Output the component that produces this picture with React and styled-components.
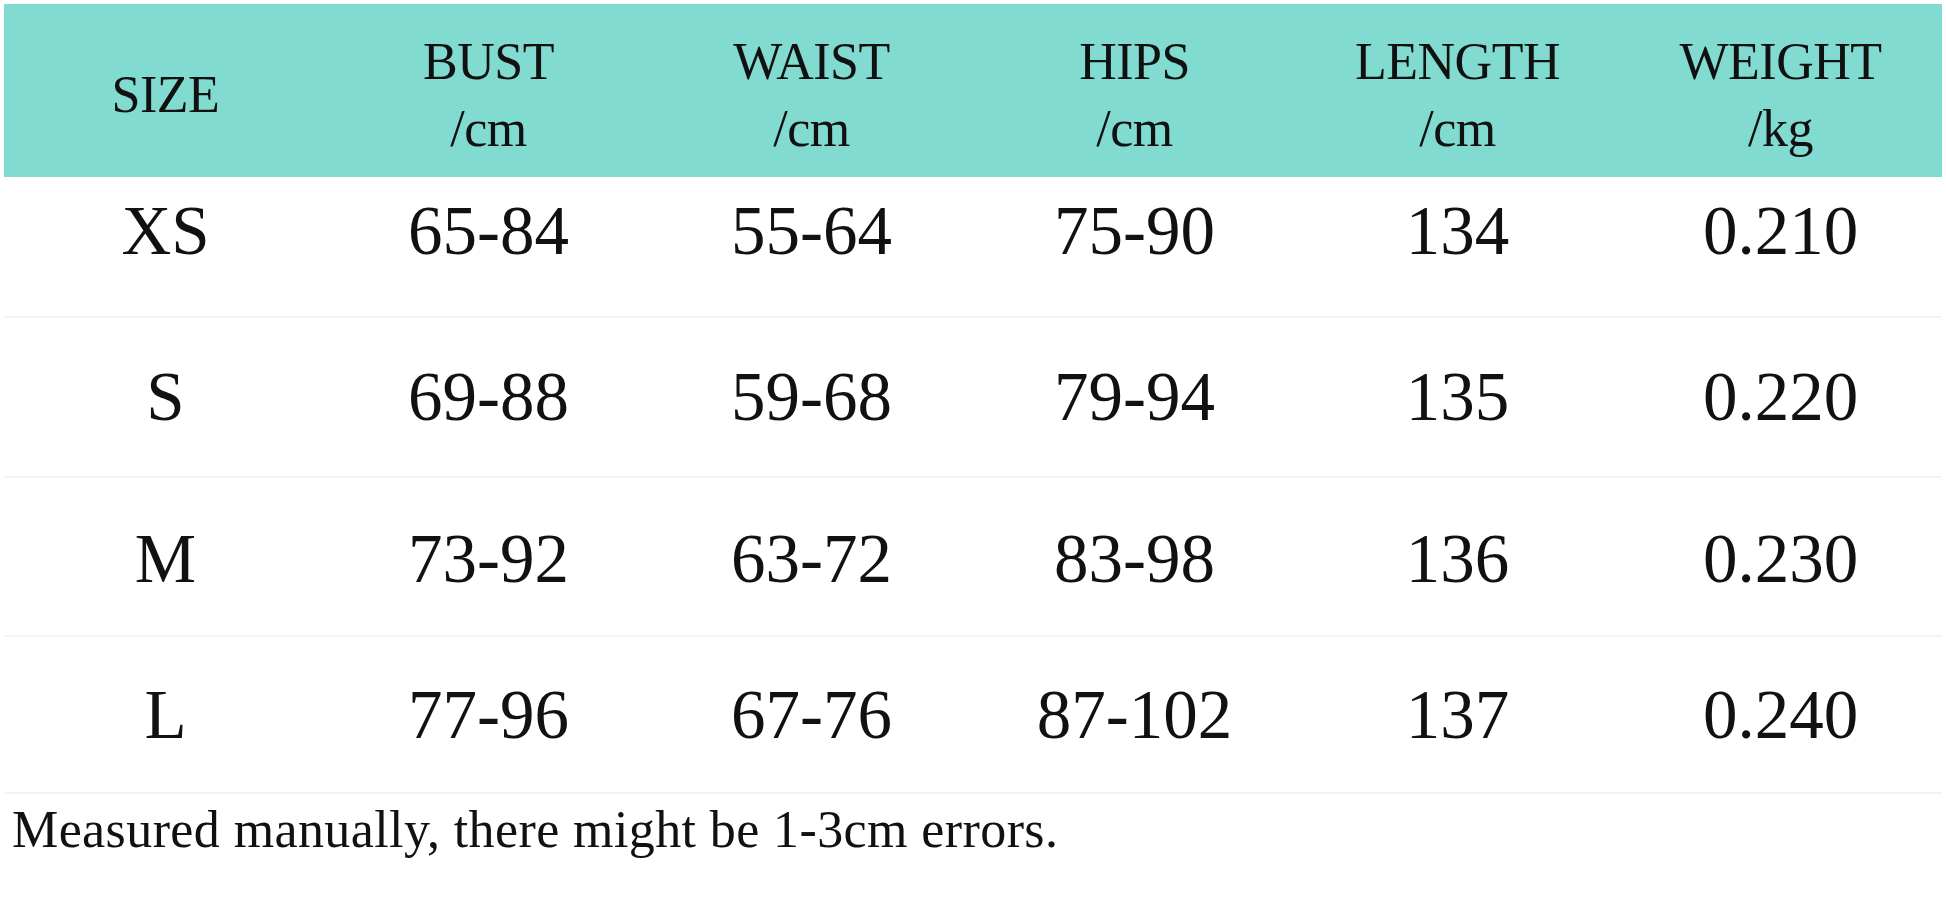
import React from "react";
import styled, { createGlobalStyle } from "styled-components";

const Global = createGlobalStyle`
  html, body { margin: 0; padding: 0; background: #ffffff; }
  body { font-family: "Liberation Serif", "Times New Roman", serif; color: #111; }
`;

const Page = styled.div`
  width: 1946px;
  height: 906px;
  overflow: hidden;
  padding: 4px 4px 0 4px;
  box-sizing: border-box;
  background: #fff;
`;

const Table = styled.div`
  display: flex;
  flex-direction: column;
  width: 1938px;
`;

const HeaderRow = styled.div`
  display: grid;
  grid-template-columns: repeat(6, 1fr);
  height: 173px;
  background: #81dbd1;
  align-items: center;
  padding-top: 8px;
  box-sizing: border-box;
`;

const HeadCell = styled.div`
  display: flex;
  flex-direction: column;
  align-items: center;
  font-size: 52px;
  line-height: 67px;
  letter-spacing: -0.5px;
  color: #111;
`;

const Row = styled.div`
  display: grid;
  grid-template-columns: repeat(6, 1fr);
  align-items: center;
  height: ${(p) => p.$h}px;
  padding-top: ${(p) => p.$pt || 0}px;
  padding-bottom: ${(p) => p.$pb || 0}px;
  box-sizing: border-box;
  border-bottom: 2px solid #f4f4f4;
`;

const Cell = styled.div`
  text-align: center;
  font-size: 69px;
  line-height: 1;
  color: #111;
`;

const Note = styled.div`
  padding: 10px 0 0 8px;
  font-size: 52px;
  line-height: 1;
  letter-spacing: 0.4px;
  color: #111;
`;

const headers = [
  ["SIZE"],
  ["BUST", "/cm"],
  ["WAIST", "/cm"],
  ["HIPS", "/cm"],
  ["LENGTH", "/cm"],
  ["WEIGHT", "/kg"],
];

const rows = [
  { h: 141, pt: 0, pb: 31, cells: ["XS", "65-84", "55-64", "75-90", "134", "0.210"] },
  { h: 160, pt: 0, pb: 0, cells: ["S", "69-88", "59-68", "79-94", "135", "0.220"] },
  { h: 159, pt: 6, pb: 0, cells: ["M", "73-92", "63-72", "83-98", "136", "0.230"] },
  { h: 157, pt: 2, pb: 0, cells: ["L", "77-96", "67-76", "87-102", "137", "0.240"] },
];

export default function App() {
  return (
    <Page>
      <Global />
      <Table>
        <HeaderRow>
          {headers.map((lines, i) => (
            <HeadCell key={i}>
              {lines.map((l) => (
                <span key={l}>{l}</span>
              ))}
            </HeadCell>
          ))}
        </HeaderRow>
        {rows.map((r) => (
          <Row key={r.cells[0]} $h={r.h} $pt={r.pt} $pb={r.pb}>
            {r.cells.map((c, i) => (
              <Cell key={i}>{c}</Cell>
            ))}
          </Row>
        ))}
      </Table>
      <Note>Measured manually, there might be 1-3cm errors.</Note>
    </Page>
  );
}
